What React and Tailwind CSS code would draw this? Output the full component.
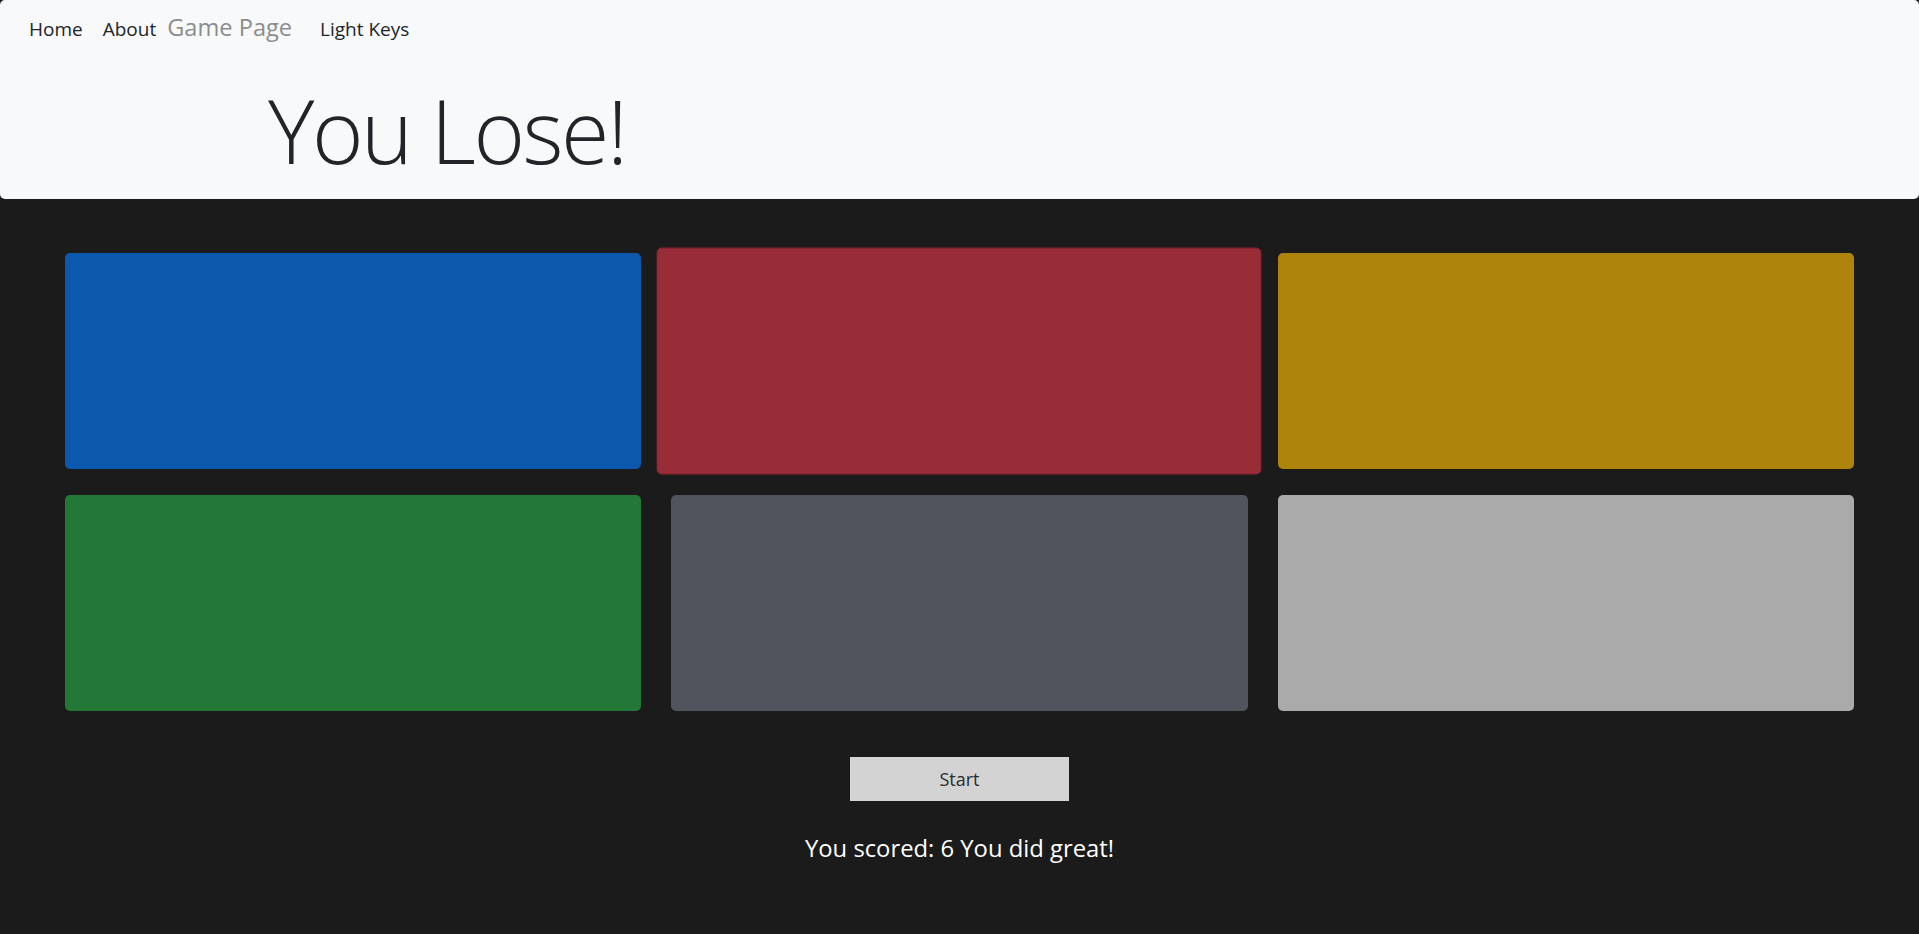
import React from 'react';

const pads = [
  { color: 'bg-[#0b58ac]', active: false },
  { color: 'bg-[#982d37]', active: true },
  { color: 'bg-[#ae840d]', active: false },
  { color: 'bg-[#237737]', active: false },
  { color: 'bg-[#50545c]', active: false },
  { color: 'bg-[#a9aaa9]', active: false },
];

function App() {
  return (
    <div className="min-h-screen bg-[#1b1b1b] font-['Open_Sans',sans-serif]">
      <header className="h-[199px] bg-[#f8f9fa] rounded-[5px]">
        <nav className="flex items-baseline pt-[13px] text-[19px] leading-[28px] text-[#212529]">
          <a className="ml-[29px] cursor-pointer">Home</a>
          <a className="ml-[20px] cursor-pointer">About</a>
          <a className="ml-[11px] text-[23.6px] text-[#8c8d8e] cursor-pointer">Game Page</a>
          <a className="ml-[28px] cursor-pointer">Light Keys</a>
        </nav>
        <h1 className="ml-[268px] mt-[35px] text-[88px] leading-[1.2] font-light tracking-[-2.5px] text-[#212529]">
          You Lose!
        </h1>
      </header>

      <main className="px-[65px] pt-[54px]">
        <div className="grid grid-cols-3 gap-x-[30px] gap-y-[26px]">
          {pads.map((pad, i) => (
            <div
              key={i}
              className={`h-[216px] rounded-[5px] ${pad.color} ${pad.active ? 'scale-[1.05] border border-[#8a2731]' : ''}`}
            />
          ))}
        </div>

        <div className="flex flex-col items-center">
          <button className="mt-[46px] w-[219px] h-[44px] bg-[#d3d3d3] text-[18px] text-[#2b2b2b]">
            Start
          </button>
          <p className="mt-[29px] text-[23.8px] leading-[36px] text-white">
            You scored: 6 You did great!
          </p>
        </div>
      </main>
    </div>
  );
}

export default App;
